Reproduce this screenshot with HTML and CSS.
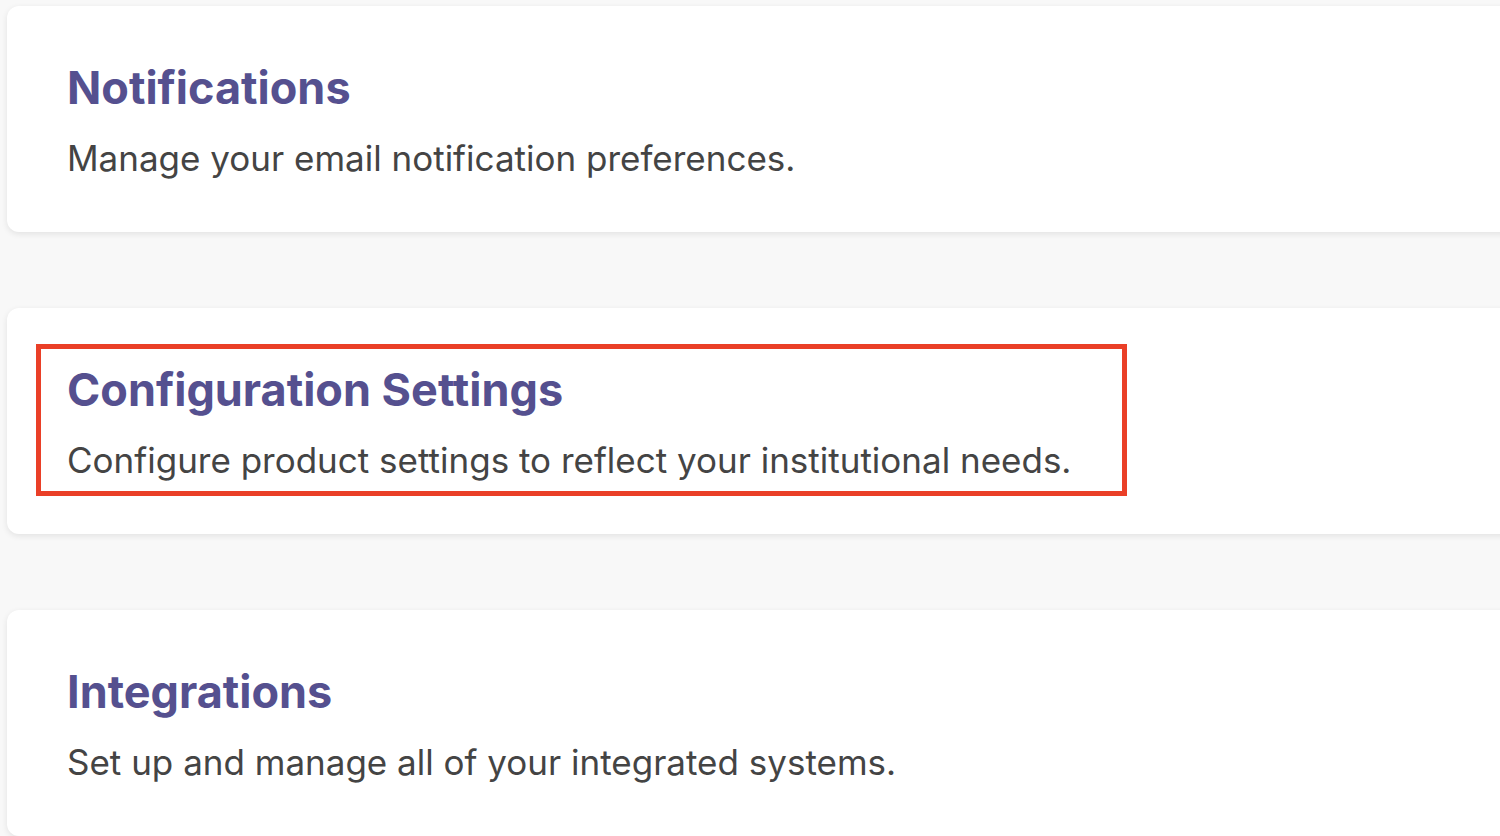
FILE: index.html
```html
<!DOCTYPE html>
<html lang="en">
<head>
    <meta charset="UTF-8">
    <meta name="viewport" content="width=device-width, initial-scale=1.0">
    <title>Settings</title>
    <link rel="stylesheet" href="styles.css">
</head>
<body>
    <div class="settings">
        <div class="card">
            <h2>Notifications</h2>
            <p>Manage your email notification preferences.</p>
        </div>

        <div class="card">
            <div class="highlight">
                <h2>Configuration Settings</h2>
                <p>Configure product settings to reflect your institutional needs.</p>
            </div>
        </div>

        <div class="card">
            <h2>Integrations</h2>
            <p>Set up and manage all of your integrated systems.</p>
        </div>
    </div>
</body>
</html>
```

FILE: styles.css
```css
html, body {
    margin: 0;
    padding: 0;
    height: 100%;
    overflow: hidden;
}
body {
    font-family: Inter, "Noto Sans", sans-serif;
    background-color: #f8f8f8;
    color: #444;
}
.settings {
    display: flex;
    flex-direction: column;
    gap: 76px;
    padding: 6px 0 0 7px;
    width: 1600px;
}
.card {
    background: #fff;
    border-radius: 12px;
    box-shadow: 0 2px 6px rgba(0, 0, 0, 0.09);
    padding: 55px 60px 51px;
    height: 226px;
    box-sizing: border-box;
}
.card h2 {
    margin: 0;
    font-size: 45px;
    font-weight: 700;
    line-height: 1.21;
    color: #55508f;
}
.card p {
    margin: 22px 0 0;
    font-size: 35px;
    line-height: 1.21;
    color: #444;
}
.highlight {
    width: fit-content;
    margin: -19px 0 0 -31px;
    padding: 14px 51px 9px 26px;
    border: 5px solid #ea3f27;
}
```
